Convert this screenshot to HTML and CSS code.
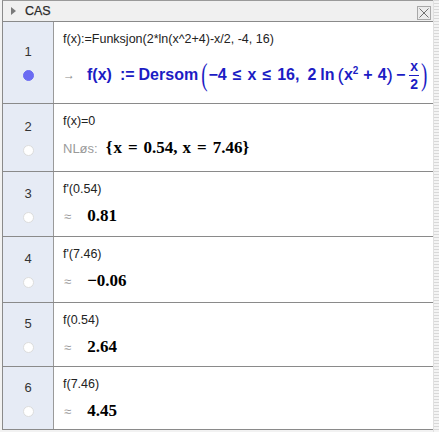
FILE: index.html
```html
<!DOCTYPE html>
<html>
<head>
<meta charset="utf-8">
<title>CAS</title>
<link rel="stylesheet" href="styles.css">
</head>
<body>
<div class="frame">
  <div class="cas">
    <div class="header">
      <span class="tri"></span>
      <span class="title">CAS</span>
      <span class="close"><svg width="14" height="14" viewBox="0 0 14 14"><rect x="0.5" y="0.5" width="13" height="13" fill="#ececec" stroke="#a8a8a8"/><path d="M2.5 2.5 L11.5 11.5 M11.5 2.5 L2.5 11.5" stroke="#707070" stroke-width="1"/></svg></span>
    </div>

    <div class="row r1">
      <div class="num"><span class="n">1</span><span class="dot on"></span></div>
      <div class="content">
        <div class="input">f(x):=Funksjon(2*ln(x^2+4)-x/2, -4, 16)</div>
        <div class="output out1">
          <span class="arrow">→</span>
          <span class="m fx">f(x)</span>
          <span class="m def">:=</span>
          <span class="m kw">Dersom</span>
          <span class="bp lp">(</span>
          <span class="m">−4</span>
          <span class="m rel">≤</span>
          <span class="m">x</span>
          <span class="m rel">≤</span>
          <span class="m">16,</span>
          <span class="m after-comma">2</span>
          <span class="m fn">ln</span>
          <span class="sp lsp">(</span>
          <span class="m">x<sup class="sup">2</sup></span>
          <span class="m bin">+</span>
          <span class="m">4</span>
          <span class="sp">)</span>
          <span class="m bin2">−</span>
          <span class="frac"><span class="ft">x</span><span class="fb">2</span></span>
          <span class="bp rp">)</span>
        </div>
      </div>
    </div>

    <div class="row r2">
      <div class="num"><span class="n">2</span><span class="dot"></span></div>
      <div class="content">
        <div class="input">f(x)=0</div>
        <div class="output">
          <span class="label">NLøs:</span>
          <span class="val brace">{</span>
          <span class="val">x</span>
          <span class="val eq">=</span>
          <span class="val">0.54,</span>
          <span class="val after-comma2">x</span>
          <span class="val eq">=</span>
          <span class="val">7.46</span>
          <span class="val">}</span>
        </div>
      </div>
    </div>

    <div class="row r3">
      <div class="num"><span class="n">3</span><span class="dot"></span></div>
      <div class="content">
        <div class="input">f'(0.54)</div>
        <div class="output"><span class="approx">≈</span><span class="val">0.81</span></div>
      </div>
    </div>

    <div class="row r4">
      <div class="num"><span class="n">4</span><span class="dot"></span></div>
      <div class="content">
        <div class="input">f'(7.46)</div>
        <div class="output"><span class="approx">≈</span><span class="val">−0.06</span></div>
      </div>
    </div>

    <div class="row r5">
      <div class="num"><span class="n">5</span><span class="dot"></span></div>
      <div class="content">
        <div class="input">f(0.54)</div>
        <div class="output"><span class="approx">≈</span><span class="val">2.64</span></div>
      </div>
    </div>

    <div class="row r6">
      <div class="num"><span class="n">6</span><span class="dot"></span></div>
      <div class="content">
        <div class="input">f(7.46)</div>
        <div class="output"><span class="approx">≈</span><span class="val">4.45</span></div>
      </div>
    </div>
  </div>
  <div class="split"></div>
</div>
</body>
</html>
```

FILE: styles.css
```css
* { box-sizing: border-box; }
html, body { margin: 0; padding: 0; }
body {
  width: 439px;
  height: 432px;
  overflow: hidden;
  background: #f2f2f2;
  font-family: "Liberation Sans", Arial, sans-serif;
}
.frame { display: flex; height: 432px; align-items: flex-start; }
.cas {
  margin-left: 2px;
  width: 431px;
  border-left: 1px solid #8a8a8a;
  border-top: 1px solid #9a9a9a;
  background: #fff;
  display: flex;
  flex-direction: column;
}
.split {
  flex: 1;
  align-self: stretch;
  background: repeating-linear-gradient(180deg, #d8d8d8 0 1px, #f4f4f4 1px 3px);
  border-left: 1px solid #e0e0e0;
}

/* header */
.header {
  height: 21px;
  border-bottom: 1px solid #8a8a8a;
  background: #f0f0f0;
  display: flex;
  align-items: center;
}
.tri {
  width: 0; height: 0;
  margin-left: 8px;
  border-left: 5px solid #7a7a7a;
  border-top: 4px solid transparent;
  border-bottom: 4px solid transparent;
}
.title {
  margin-left: 9px;
  font-size: 12.5px;
  color: #2a2a2a;
  flex: 1;
  -webkit-text-stroke: 0.25px #2a2a2a;
}
.close { display: flex; margin-right: 2px; margin-top: 3px; }

/* rows */
.row { display: flex; border-bottom: 1px solid #8a8a8a; }
.r1 { height: 82px; }
.r2 { height: 68px; }
.r3 { height: 65px; }
.r4 { height: 66px; }
.r5 { height: 64px; }
.r6 { height: 63px; }

.num {
  width: 51px;
  background: #e6ebf5;
  border-right: 1px solid #9a9a9a;
  display: flex;
  flex-direction: column;
  align-items: center;
  justify-content: center;
  gap: 10px;
}
.n { font-size: 13px; line-height: 16px; color: #333; }
.dot {
  width: 11px; height: 11px;
  border-radius: 50%;
  background: #fff;
  border: 1px solid #dcdcdc;
}
.dot.on { background: #6b6bf2; border-color: #6b6bf2; }

.content { flex: 1; padding: 8px 0 0 9px; }
.input {
  height: 18px;
  line-height: 18px;
  font-size: 12.5px;
  color: #222;
  white-space: nowrap;
}
.output {
  display: flex;
  align-items: center;
  height: 20px;
  margin-top: 8px;
  white-space: nowrap;
}
.out1 { height: 36px; margin-top: 9px; }

/* blue formula */
.arrow { font-size: 12px; color: #8a8a8a; }
.m {
  font-size: 16px;
  font-weight: bold;
  color: #1c1cc4;
  line-height: 20px;
}
.fx { margin-left: 12px; }
.def { margin-left: 8px; }
.kw { margin-left: 4px; }
.bp {
  font-family: "Liberation Serif", "Times New Roman", serif;
  font-size: 19px;
  line-height: 20px;
  color: #1c1cc4;
  transform: scaleY(1.65);
}
.lp { margin-left: 3px; margin-right: 1px; }
.rp { margin-left: 2px; }
.rel { margin: 0 6px; }
.after-comma { margin-left: 8px; }
.fn { margin-left: 4px; }
.sp { font-size: 19px; line-height: 20px; color: #1c1cc4; }
.lsp { margin-left: 3px; }
.sup { font-size: 10px; vertical-align: 6px; line-height: 0; }
.bin { margin: 0 5px; }
.bin2 { margin: 0 4px 0 3px; }
.frac {
  display: flex;
  flex-direction: column;
  align-items: center;
  font-size: 14px;
  font-weight: bold;
  color: #1c1cc4;
}
.ft { line-height: 13px; padding: 0 1px 2px; border-bottom: 1.5px solid #1c1cc4; }
.fb { line-height: 13px; padding-top: 2px; }

/* values */
.label { font-size: 13px; color: #9a9a9a; }
.approx { font-size: 13px; color: #9a9a9a; margin-left: 1px; }
.val {
  font-family: "Liberation Serif", "Times New Roman", serif;
  font-weight: bold;
  font-size: 17px;
  color: #000;
  line-height: 20px;
}
.approx + .val { margin-left: 16px; }
.brace { margin-left: 8px; margin-right: 1px; }
.eq { margin: 0 6px; }
.after-comma2 { margin-left: 5px; }
```
